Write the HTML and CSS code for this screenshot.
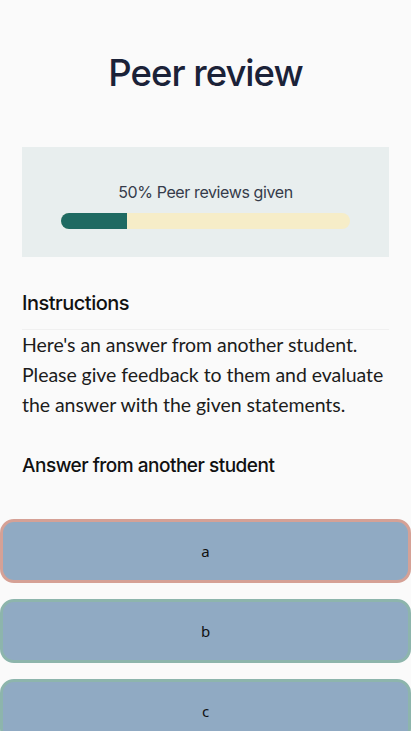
FILE: index.html
```html
<!DOCTYPE html>
<html>
<head>
<meta charset="utf-8">
<link rel="stylesheet" href="styles.css">
</head>
<body>
<div class="page">
  <h1 class="title">Peer review</h1>
  <div class="progress-card">
    <div class="progress-label">50% Peer reviews given</div>
    <div class="bar"><div class="bar-fill" style="width: 22.8%"></div></div>
  </div>
  <h2 class="section-title">Instructions</h2>
  <div class="divider"></div>
  <p class="instructions">Here's an answer from another student. Please give feedback to them and evaluate the answer with the given statements.</p>
  <h3 class="answer-title">Answer from another student</h3>
</div>
<div class="options">
  <div class="option option-red">a</div>
  <div class="option option-green">b</div>
  <div class="option option-green">c</div>
</div>
</body>
</html>
```
FILE: styles.css
```css
html, body {
  margin: 0;
  padding: 0;
  background: #fafafa;
}
body {
  font-family: "Lato", sans-serif;
  color: #1a1a1a;
}
.page {
  padding: 0 22px;
}
.title {
  margin: 0;
  padding-top: 50px;
  height: 147px;
  box-sizing: border-box;
  text-align: center;
  font-family: "Inter", sans-serif;
  font-weight: 500;
  font-size: 36.5px;
  letter-spacing: -1px;
  color: #1b2238;
  line-height: 46px;
}
.progress-card {
  background: #e8eeee;
  height: 110px;
  box-sizing: border-box;
  padding: 32px 39px 0;
}
.progress-label {
  text-align: center;
  font-family: "Inter", sans-serif;
  font-size: 16px;
  letter-spacing: -0.4px;
  color: #353b4a;
  line-height: 26px;
}
.bar {
  margin-top: 8px;
  height: 16px;
  border-radius: 8px;
  background: #f6edc8;
  overflow: hidden;
}
.bar-fill {
  height: 100%;
  background: #1f6a62;
}
.section-title {
  margin: 32px 0 0;
  font-family: "Inter", sans-serif;
  font-weight: 500;
  font-size: 20px;
  letter-spacing: -0.5px;
  line-height: 28px;
  color: #111;
}
.divider {
  margin-top: 12px;
  height: 1px;
  background: #f0f0f0;
}
.instructions {
  margin: 0;
  font-size: 19.5px;
  letter-spacing: -0.05px;
  line-height: 30px;
  color: #1c1c1c;
}
.answer-title {
  margin: 32px 0 0;
  font-family: "Inter", sans-serif;
  font-weight: 500;
  font-size: 19px;
  letter-spacing: -0.5px;
  line-height: 28px;
  color: #111;
}
.options {
  margin-top: 39px;
  display: flex;
  flex-direction: column;
  gap: 16px;
}
.option {
  height: 64px;
  box-sizing: border-box;
  border: 3px solid #8db5ac;
  border-radius: 14px;
  background: #90aac3;
  display: flex;
  align-items: center;
  justify-content: center;
  font-family: "Noto Sans", sans-serif;
  font-size: 15px;
  color: #111;
}
.option-red {
  border-color: #d5a196;
}
```
